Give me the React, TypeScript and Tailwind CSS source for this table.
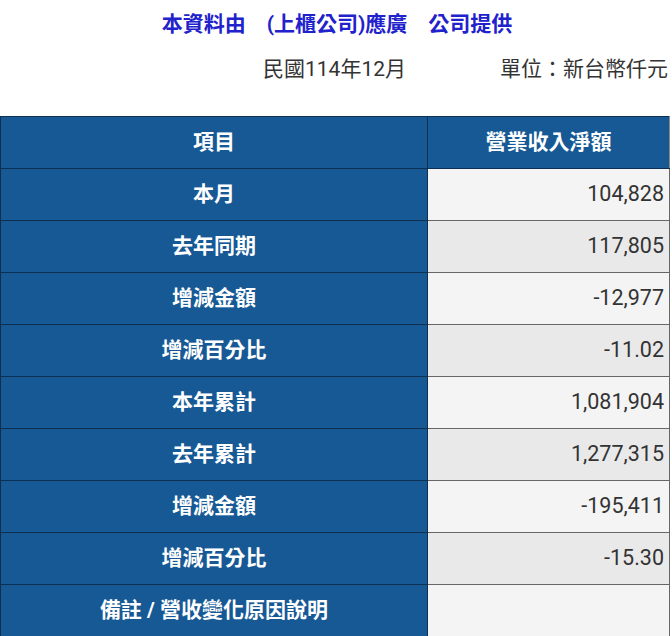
import React from "react";

const rows: [string, string][] = [
  ["本月", "104,828"],
  ["去年同期", "117,805"],
  ["增減金額", "-12,977"],
  ["增減百分比", "-11.02"],
  ["本年累計", "1,081,904"],
  ["去年累計", "1,277,315"],
  ["增減金額", "-195,411"],
  ["增減百分比", "-15.30"],
  ["備註 / 營收變化原因說明", ""],
];

export default function App() {
  return (
    <div
      className="w-[672px] h-[636px] overflow-hidden bg-white"
      style={{ fontFamily: "Roboto, 'Noto Sans CJK TC', sans-serif" }}
    >
      <div className="h-[48px] flex items-center justify-center text-[21px] font-bold text-[#2222cc] pt-[1px] pl-[2px]">
        本資料由　(上櫃公司)應廣　公司提供
      </div>
      <div className="h-[44px] flex items-center text-[21px] text-[#333]">
        <span className="ml-[263px]">民國114年12月</span>
        <span className="ml-auto mr-[4px]">單位：新台幣仟元</span>
      </div>
      <table className="mt-[24px] w-[670px] border-collapse table-fixed">
        <colgroup>
          <col className="w-[427px]" />
          <col />
        </colgroup>
        <thead>
          <tr className="h-[52px]">
            <th className="bg-[#175995] text-white text-[21px] font-bold border border-[#0d2f52]">項目</th>
            <th className="bg-[#175995] text-white text-[21px] font-bold border border-[#0d2f52] border-r-[#888]">營業收入淨額</th>
          </tr>
        </thead>
        <tbody>
          {rows.map(([k, v], i) => (
            <tr key={i} className="h-[52px]">
              <td className="bg-[#175995] text-white text-[21px] font-bold text-center border border-[#0d2f52]">{k}</td>
              <td
                className={`${i % 2 === 0 ? "bg-[#f4f4f4]" : "bg-[#e9e9e9]"} text-[#333] text-[21.5px] text-right pr-[5px] border border-[#666] border-l-[#0d2f52]`}
              >
                {v}
              </td>
            </tr>
          ))}
        </tbody>
      </table>
    </div>
  );
}
